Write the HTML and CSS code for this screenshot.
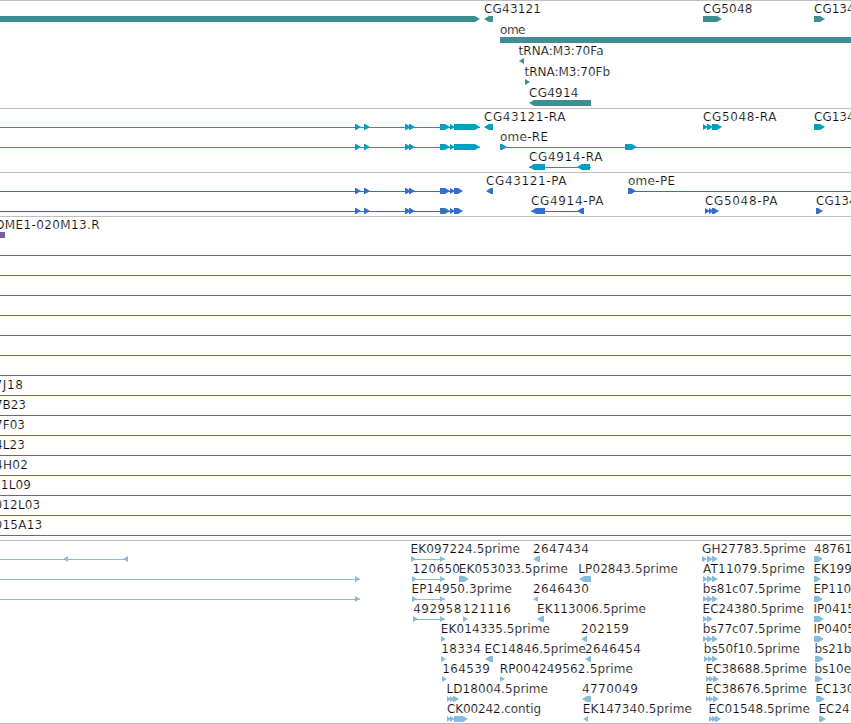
FILE: index.html
```
<!DOCTYPE html>
<html lang="en">
<head>
    <meta charset="UTF-8">
    <meta name="viewport" content="width=device-width, initial-scale=1.0">
    <title>Genome Browser</title>
    <link rel="stylesheet" href="styles.css">
</head>
<body>
    <main class="browser">
        <section class="track gene" id="genes"></section>
        <section class="track transcript" id="transcripts"></section>
        <section class="track protein" id="proteins"></section>
        <section class="track clone" id="clones"></section>
        <section class="track est" id="ests"></section>
    </main>

    <script src="script.js"></script>
</body>
</html>
```
FILE: styles.css
```
body {
    margin: 0;
    background-color: #ffffff;
    color: #000000;
    overflow: hidden;
}

.browser {
    display: flex;
    flex-direction: column;
    width: 851px;
    border-bottom: 1px solid #bebebe;
}

.track {
    border-top: 1px solid #bebebe;
}

.track svg {
    display: block;
}

/* thin white outline keeps the labels light */
.track text {
    font-family: "DejaVu Sans", sans-serif;
    font-size: 12px;
    fill: #000000;
    stroke: #ffffff;
    stroke-width: 0.2;
}

.gene {
    fill: #3e8e94;
    stroke: #3e8e94;
}

.transcript {
    fill: #039fbf;
    stroke: #039fbf;
}

.protein {
    fill: #346dcc;
    stroke: #346dcc;
}

.clone {
    fill: #775ba9;
    stroke: #775ba9;
}

.est {
    fill: #87bbdd;
    stroke: #87bbdd;
}

.feature {
    stroke: none;
}

.intron {
    stroke-width: 1;
    shape-rendering: crispEdges;
}
```
FILE: script.js
```
const WIDTH = 851;
const TIP = 5;

// Each row: y = middle of the glyphs, labels = [text, start, end],
// introns = [start, end], right / left = exons pointing that way.
const exonsRA = [[355, 361], [364, 370], [405, 411], [409, 415], [440, 450], [450, 455], [454, 480]];
const exonsPA = [[355, 361], [364, 370], [405, 411], [409, 415], [440, 450], [450, 455], [454, 463]];

const tracks = [
    {
        id: "genes", top: 1, height: 107,
        rows: [
            { y: 19, labels: [["CG43121", 484, 541], ["CG5048", 703, 752.5], ["CG134", 814]],
              right: [[-10, 480], [703, 722], [814, 825]], left: [[484, 493]] },
            { y: 40, labels: [["ome", 500, 525.5]], right: [[500, 870]] },
            { y: 61, labels: [["tRNA:M3:70Fa", 518.5, 603.5]], left: [[519, 524]] },
            { y: 82, labels: [["tRNA:M3:70Fb", 524.5, 610]], right: [[525, 530]] },
            { y: 103, labels: [["CG4914", 529, 578.5]], left: [[529, 591]] }
        ]
    },
    {
        id: "transcripts", top: 109, height: 63,
        rows: [
            { y: 127, labels: [["CG43121-RA", 484, 565.5], ["CG5048-RA", 703, 776.5], ["CG134", 814]],
              introns: [[0, 480]], right: [...exonsRA, [703, 708], [707, 713], [712, 722], [814, 825]], left: [[484, 493]] },
            { y: 147, labels: [["ome-RE", 500, 548]],
              introns: [[0, 480], [500, 851]], right: [...exonsRA, [500, 507], [625, 637]] },
            { y: 167, labels: [["CG4914-RA", 529, 602.5]],
              introns: [[529, 591]], left: [[529, 545], [577, 590]] }
        ]
    },
    {
        id: "proteins", top: 173, height: 43,
        rows: [
            { y: 191, labels: [["CG43121-PA", 486, 566.5], ["ome-PE", 628, 675]],
              introns: [[0, 460], [628, 851]], right: [...exonsPA, [628, 636]], left: [[486, 493]] },
            { y: 211, labels: [["CG4914-PA", 531, 603.5], ["CG5048-PA", 705, 777.5], ["CG134", 816]],
              introns: [[0, 460], [531, 584]],
              right: [...exonsPA, [705, 710], [709, 714], [712, 719], [816, 823]], left: [[531, 545], [577, 584]] }
        ]
    },
    {
        id: "clones", top: 217, height: 323,
        rows: [
            { y: 235, labels: [["OME1-020M13.R", -5, 99.5]], left: [[-10, 5]] },
            { y: 255, introns: [[0, 851]] },
            { y: 275, introns: [[0, 851]] },
            { y: 295, introns: [[0, 851]] },
            { y: 315, introns: [[0, 851]] },
            { y: 335, introns: [[0, 851]] },
            { y: 355, introns: [[0, 851]] },
            { y: 375, introns: [[0, 851]] },
            { y: 395, labels: [["7J18", -5.5, 22.8]], introns: [[0, 851]] },
            { y: 415, labels: [["7B23", -5, 26]], introns: [[0, 851]] },
            { y: 435, labels: [["7F03", -5, 25]], introns: [[0, 851]] },
            { y: 455, labels: [["4L23", -5, 25]], introns: [[0, 851]] },
            { y: 475, labels: [["4H02", -5, 28]], introns: [[0, 851]] },
            { y: 495, labels: [["11L09", -7, 31]], introns: [[0, 851]] },
            { y: 515, labels: [["012L03", -5.5, 40.2]], introns: [[0, 851]] },
            { y: 535, labels: [["015A13", -5.5, 42.2]], introns: [[0, 851]] }
        ]
    },
    {
        id: "ests", top: 541, height: 182,
        rows: [
            { y: 559, labels: [["EK097224.5prime", 410.5, 520], ["2647434", 533, 589], ["GH27783.5prime", 702, 806], ["48761", 814]],
              introns: [[0, 128], [411, 445]],
              right: [[411, 416], [440, 445], [702, 707], [707, 713], [712, 718], [814, 823]],
              left: [[63, 68], [123, 128], [533, 540]] },
            { y: 579, labels: [["120650", 412.5, 460], ["EK053033.5prime", 458.7, 568], ["LP02843.5prime", 578.3, 678], ["AT11079.5prime", 703, 805], ["EK199", 813.5]],
              introns: [[0, 360], [412, 445]],
              right: [[355, 360], [412, 417], [440, 445], [459, 469], [703, 708], [707, 713], [712, 718], [814, 821]],
              left: [[579, 591]] },
            { y: 599, labels: [["EP14950.3prime", 411.5, 512], ["2646430", 533, 589], ["bs81c07.5prime", 702.7, 801], ["EP110", 813.5]],
              introns: [[0, 360], [412, 445]],
              right: [[355, 360], [412, 417], [440, 445], [703, 708], [707, 713], [712, 718], [814, 823]],
              left: [[533, 538]] },
            { y: 619, labels: [["492958", 413.3, 461.3], ["121116", 463, 511], ["EK113006.5prime", 537, 646], ["EC24380.5prime", 702.5, 804], ["IP0415", 813.5]],
              introns: [[413, 445]],
              right: [[413, 418], [440, 445], [463, 468], [703, 708], [707, 713], [814, 824]],
              left: [[537, 544]] },
            { y: 639, labels: [["EK014335.5prime", 440.7, 550], ["202159", 581, 629], ["bs77c07.5prime", 702.7, 801], ["IP0405", 813.5]],
              right: [[441, 446], [703, 708], [707, 713], [712, 718], [814, 824]], left: [[581, 587]] },
            { y: 659, labels: [["18334", 441.3, 481], ["EC14846.5prime", 484.5, 586], ["2646454", 585, 641], ["bs50f10.5prime", 703.7, 800], ["bs21b", 814.5]],
              right: [[441, 446], [704, 709], [708, 713], [712, 718], [815, 824]], left: [[485, 493], [585, 591]] },
            { y: 679, labels: [["164539", 442.3, 490], ["RP004249562.5prime", 499.7, 633], ["EC38688.5prime", 705.5, 807], ["bs10e", 814.5]],
              right: [[442, 447], [500, 505], [706, 710], [709, 714], [713, 719], [815, 823]] },
            { y: 699, labels: [["LD18004.5prime", 446.5, 548], ["4770049", 582, 638], ["EC38676.5prime", 705.5, 807], ["EC130", 815.5]],
              right: [[447, 451], [450, 455], [453, 459], [706, 710], [709, 714], [713, 719], [816, 825]], left: [[582, 591]] },
            { y: 719, labels: [["CK00242.contig", 447, 541], ["EK147340.5prime", 582.7, 692], ["EC01548.5prime", 708.5, 810], ["EC24", 818.5]],
              right: [[447, 451], [450, 455], [454, 468], [709, 713], [712, 717], [715, 721], [819, 826]], left: [[583, 588]] }
        ]
    }
];

// Block with a pointed end, 6px high
function exon([start, end], y, left) {
    const tip = Math.min(TIP, end - start);
    const points = left
        ? `${end},${y - 3} ${start + tip},${y - 3} ${start},${y} ${start + tip},${y + 3} ${end},${y + 3}`
        : `${start},${y - 3} ${end - tip},${y - 3} ${end},${y} ${end - tip},${y + 3} ${start},${y + 3}`;
    return `<polygon class="feature" points="${points}"/>`;
}

function intron([start, end], y) {
    return `<line class="intron" x1="${start}" y1="${y + 0.5}" x2="${end}" y2="${y + 0.5}"/>`;
}

function label([text, start, end], y) {
    const fit = end ? ` textLength="${(end - start).toFixed(1)}"` : "";
    return `<text x="${start}" y="${y - 6}"${fit}>${text}</text>`;
}

tracks.forEach((track) => {
    let shapes = "";
    track.rows.forEach((row) => {
        (row.introns || []).forEach((item) => { shapes += intron(item, row.y); });
        (row.right || []).forEach((item) => { shapes += exon(item, row.y, false); });
        (row.left || []).forEach((item) => { shapes += exon(item, row.y, true); });
        (row.labels || []).forEach((item) => { shapes += label(item, row.y); });
    });
    document.getElementById(track.id).innerHTML =
        `<svg width="${WIDTH}" height="${track.height}" viewBox="0 ${track.top} ${WIDTH} ${track.height}">${shapes}</svg>`;
});
```
